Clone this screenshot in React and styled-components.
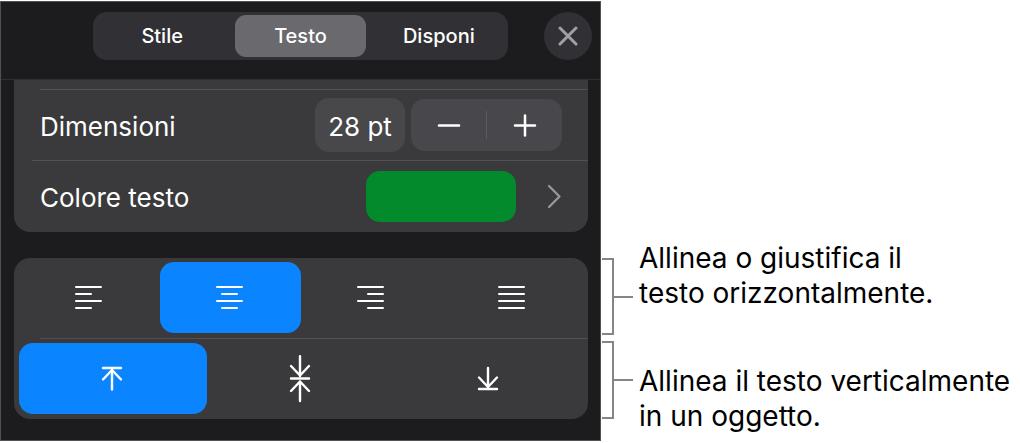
import React, { useState } from "react";
import styled, { createGlobalStyle } from "styled-components";

const GlobalStyle = createGlobalStyle`
  *, *::before, *::after { box-sizing: border-box; }
  body { margin: 0; background: #fff; }
  button, input { font: inherit; color: inherit; margin: 0; padding: 0; border: 0; background: none; }
  button { cursor: pointer; }
  svg { display: block; }
`;

const Page = styled.main`
  display: grid;
  grid-template-columns: minmax(0, 1fr) 419px;
  align-items: start;
  padding-top: 1px;
  font-family: Inter, "Liberation Sans", sans-serif;
`;

const Panel = styled.section`
  border: 1px solid #515153;
  background: #1c1c1e;
  color: #fff;
  font-size: 26px;
`;

const Header = styled.header`
  display: grid;
  grid-template-columns: 1fr minmax(0, 415px) 1fr;
  align-items: start;
  padding: 10px 8px 19px;
  border-bottom: 1px solid #303032;
`;

const Segments = styled.nav`
  grid-column: 2;
  display: flex;
  gap: 8px;
  padding: 3px 4px;
  border-radius: 14px;
  background: #313135;
`;

const Segment = styled.button`
  flex: 1 1 0;
  height: 42px;
  border-radius: 11px;
  font-size: 20px;
  font-weight: 500;
  background: ${(p) => (p.$active ? "#69696e" : "transparent")};
`;

const CloseButton = styled.button`
  justify-self: end;
  display: grid;
  place-items: center;
  width: 48px;
  height: 48px;
  border-radius: 50%;
  background: #313135;
  color: #a0a0a8;
`;

const Body = styled.div`
  display: flex;
  flex-direction: column;
  gap: 26px;
  padding: 0 12px 21px 13px;
`;

const Card = styled.div`
  border-radius: ${(p) => (p.$scrolled ? "0 0 16px 16px" : "16px")};
  padding-top: ${(p) => (p.$scrolled ? "9px" : "0")};
  background: #3a3a3c;
`;

const Rule = styled.hr`
  height: 1px;
  margin: 0 0 0 ${(p) => p.$inset}px;
  border: 0;
  background: #525254;
`;

const Row = styled.div`
  display: flex;
  align-items: center;
  width: 100%;
  height: ${(p) => p.$height}px;
  padding: 0 26px;
  text-align: left;
`;

const RowLabel = styled.label`
  flex: 1;
  padding-top: 2px;
`;

const SizeField = styled.input`
  width: 90px;
  height: 54px;
  margin-right: 6px;
  padding-top: 2px;
  border-radius: 14px;
  background: #48484a;
  text-align: center;
`;

const Stepper = styled.div`
  display: flex;
  align-items: center;
  height: 52px;
  border-radius: 14px;
  background: #48484c;
`;

const StepButton = styled.button`
  display: grid;
  place-items: center;
  width: 75px;
  height: 52px;
`;

const StepDivider = styled.span`
  width: 1px;
  height: 28px;
  background: #5c5c60;
`;

const Swatch = styled.span`
  width: 150px;
  height: 51px;
  margin-right: 31px;
  border-radius: 14px;
  background: #028a2c;
`;

const Disclosure = styled.span`
  color: #98989c;
`;

const ButtonBar = styled.div`
  display: flex;
  padding: 4px 5px 5px;
`;

const AlignButton = styled.button`
  flex: 1 1 0;
  display: grid;
  place-items: center;
  height: 71px;
  border-radius: 14px;
  background: ${(p) => (p.$active ? "#0a84ff" : "transparent")};
`;

const Notes = styled.aside`
  display: grid;
  grid-template-columns: 31px 1fr;
  column-gap: 6px;
  padding-left: 1px;
`;

const Brackets = styled.div`
  display: flex;
  flex-direction: column;
  gap: 6px;
  padding-top: 257px;
`;

const Bracket = styled.div`
  display: flex;
  align-items: center;
  height: ${(p) => p.$height}px;
`;

const BracketArm = styled.span`
  width: 12px;
  height: 100%;
  border: 2px solid #858585;
  border-left: 0;
`;

const BracketTail = styled.span`
  flex: 1;
  height: 2px;
  background: #858585;
`;

const NoteTexts = styled.div`
  display: flex;
  flex-direction: column;
  gap: 53px;
  padding-top: 240px;
`;

const NoteText = styled.p`
  margin: 0;
  font-size: 28px;
  line-height: 35px;
  white-space: nowrap;
  color: #000;
`;

const Stroke = ({ width, height, d, weight = 2 }) => (
  <svg width={width} height={height} viewBox={`0 0 ${width} ${height}`} fill="none"
    stroke="currentColor" strokeWidth={weight} strokeLinecap="round" strokeLinejoin="round" aria-hidden="true">
    <path d={d} />
  </svg>
);

const horizontal = [
  ["Allinea a sinistra", "M1 2H26M1 9H16M1 16H26M1 23H16"],
  ["Centra", "M1 2H26M6 9H21M1 16H26M6 23H21"],
  ["Allinea a destra", "M1 2H26M11 9H26M1 16H26M11 23H26"],
  ["Giustifica", "M1 2H26M1 9H26M1 16H26M1 23H26"],
];

const vertical = [
  ["Allinea in alto", "M2 13H20M11 34.5V15M2 24.500L11 15L20 24.500"],
  ["Allinea al centro", "M11 1.200V21M2 11L11 20.500L20 11M2 23.500H20M11 46V26.500M2 36L11 26.500L20 36"],
  ["Allinea in basso", "M11 13V32M2 22.500L11 32L20 22.500M2 34H20"],
];

const tabs = ["Stile", "Testo", "Disponi"];

export default function App() {
  const [tab, setTab] = useState(1);
  const [size, setSize] = useState(28);
  const [h, setH] = useState(1);
  const [v, setV] = useState(0);

  return (
    <>
      <GlobalStyle />
      <Page>
        <Panel>
          <Header>
            <Segments>
              {tabs.map((name, i) => (
                <Segment key={name} $active={i === tab} aria-pressed={i === tab} onClick={() => setTab(i)}>
                  {name}
                </Segment>
              ))}
            </Segments>
            <CloseButton aria-label="Chiudi">
              <Stroke width={20} height={20} d="M2 2L18 18M18 2L2 18" weight={3} />
            </CloseButton>
          </Header>
          <Body>
            <Card $scrolled>
              <Rule $inset={26} />
              <Row $height={70}>
                <RowLabel htmlFor="size">Dimensioni</RowLabel>
                <SizeField id="size" value={`${size} pt`} onChange={(e) => setSize(parseInt(e.target.value, 10) || 0)} />
                <Stepper>
                  <StepButton aria-label="Riduci" onClick={() => setSize(size - 1)}>
                    <Stroke width={24} height={24} d="M2 12.500H22" weight={2.5} />
                  </StepButton>
                  <StepDivider />
                  <StepButton aria-label="Aumenta" onClick={() => setSize(size + 1)}>
                    <Stroke width={24} height={24} d="M2 12.500H22M12 2.500V22.500" weight={2.5} />
                  </StepButton>
                </Stepper>
              </Row>
              <Rule $inset={18} />
              <Row as="button" $height={71}>
                <RowLabel as="span">Colore testo</RowLabel>
                <Swatch />
                <Disclosure>
                  <Stroke width={15} height={25} d="M2 2L12.500 12.500L2 23" weight={2.3} />
                </Disclosure>
              </Row>
            </Card>
            <Card>
              <ButtonBar>
                {horizontal.map(([name, d], i) => (
                  <AlignButton key={name} aria-label={name} $active={i === h} aria-pressed={i === h} onClick={() => setH(i)}>
                    <Stroke width={29} height={25} d={d} />
                  </AlignButton>
                ))}
              </ButtonBar>
              <Rule $inset={26} />
              <ButtonBar>
                {vertical.map(([name, d], i) => (
                  <AlignButton key={name} aria-label={name} $active={i === v} aria-pressed={i === v} onClick={() => setV(i)}>
                    <Stroke width={24} height={48} d={d} weight={2.4} />
                  </AlignButton>
                ))}
              </ButtonBar>
            </Card>
          </Body>
        </Panel>
        <Notes>
          <Brackets>
            <Bracket $height={77}><BracketArm /><BracketTail /></Bracket>
            <Bracket $height={78}><BracketArm /><BracketTail /></Bracket>
          </Brackets>
          <NoteTexts>
            <NoteText>Allinea o giustifica il<br />testo orizzontalmente.</NoteText>
            <NoteText>Allinea il testo verticalmente<br />in un oggetto.</NoteText>
          </NoteTexts>
        </Notes>
      </Page>
    </>
  );
}
